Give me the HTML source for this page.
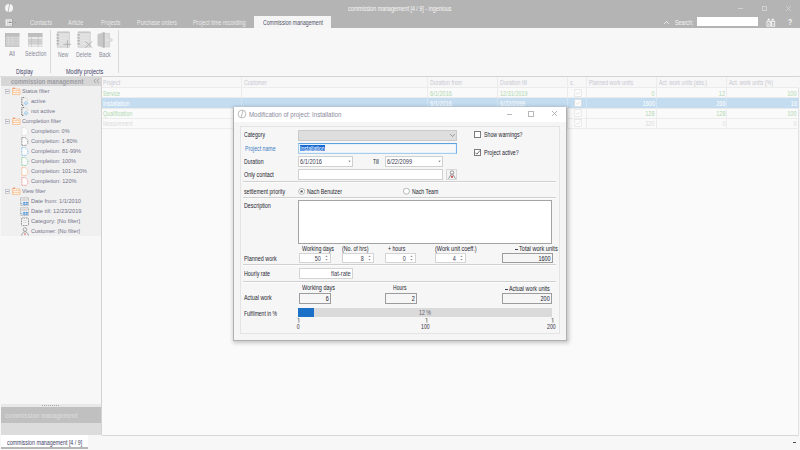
<!DOCTYPE html>
<html><head><meta charset="utf-8"><style>
html,body{margin:0;padding:0;}
body{width:800px;height:450px;overflow:hidden;position:relative;background:#f5f5f5;font-family:"Liberation Sans", sans-serif;}
body>div,body>svg,body>span{position:absolute;}
.t{position:absolute;white-space:nowrap;line-height:1;}
</style></head><body>
<div style="left:0px;top:0px;width:800px;height:28px;background:#b4b4b4"></div>
<svg style="left:4px;top:3px" width="10" height="10" viewBox="0 0 10 10"><circle cx="5" cy="5" r="4" fill="#f4f4f4"/><path d="M5.7 0.6L4.1 9.4" stroke="#b4b4b4" stroke-width="0.9"/></svg>
<span class="t" style="left:347.5px;top:6.01px;font-size:6.3px;color:#f8f8f8;font-weight:normal;;transform:scaleX(0.849);transform-origin:0 0">commission management [4 / 9] - ingenious</span>
<div style="left:738px;top:8px;width:5px;height:1px;background:#d0d0d0"></div>
<div style="left:762px;top:6px;width:5px;height:5px;border:1px solid #d0d0d0;box-sizing:border-box"></div>
<svg style="left:785px;top:5px" width="7" height="7" viewBox="0 0 7 7"><path d="M1 1L6 6M6 1L1 6" stroke="#d4d4d4" stroke-width="0.8"/></svg>
<svg style="left:5px;top:19px" width="12" height="7" viewBox="0 0 12 7"><rect x="0.6" y="0.3" width="6.8" height="6.4" fill="#f2f2f2"/><rect x="2.2" y="1.2" width="1" height="4.6" fill="#c8c8c8"/><rect x="3.6" y="2.7" width="3" height="1.4" fill="#8a8a8a"/><rect x="3.8" y="0.9" width="2.6" height="1" fill="#d0d0d0"/><rect x="3.8" y="5" width="2.6" height="1" fill="#d0d0d0"/><path d="M7.6 0V7" stroke="#8c8c8c" stroke-width="0.7"/><circle cx="10.3" cy="3.5" r="0.45" fill="#8a8a8a"/></svg>
<span class="t" style="left:30.1px;top:20.21px;font-size:6.3px;color:#eaeaea;font-weight:normal;;transform:scaleX(0.885);transform-origin:0 0">Contacts</span>
<span class="t" style="left:68.4px;top:20.21px;font-size:6.3px;color:#eaeaea;font-weight:normal;;transform:scaleX(0.874);transform-origin:0 0">Article</span>
<span class="t" style="left:100.6px;top:20.21px;font-size:6.3px;color:#eaeaea;font-weight:normal;;transform:scaleX(0.861);transform-origin:0 0">Projects</span>
<span class="t" style="left:136.6px;top:20.21px;font-size:6.3px;color:#eaeaea;font-weight:normal;;transform:scaleX(0.865);transform-origin:0 0">Purchase orders</span>
<span class="t" style="left:193px;top:20.21px;font-size:6.3px;color:#eaeaea;font-weight:normal;;transform:scaleX(0.858);transform-origin:0 0">Project time recording</span>
<div style="left:254px;top:16px;width:77px;height:12px;background:#f5f5f5"></div>
<span class="t" style="left:263px;top:20.21px;font-size:6.3px;color:#505066;font-weight:normal;;transform:scaleX(0.820);transform-origin:0 0">Commission management</span>
<svg style="left:663px;top:20px" width="7" height="5" viewBox="0 0 7 5"><path d="M1.2 3.8L3.5 1.5L5.8 3.8" fill="none" stroke="#f4f4f4" stroke-width="0.9"/></svg>
<span class="t" style="left:675px;top:19.81px;font-size:6.3px;color:#f4f4f4;font-weight:normal;;transform:scaleX(0.852);transform-origin:0 0">Search:</span>
<div style="left:697px;top:17px;width:61px;height:9px;background:#ffffff"></div>
<svg style="left:766px;top:17px" width="10" height="10" viewBox="0 0 10 10"><path d="M1.2 3.6L2.4 1.2L3.8 2.2V3.6Z M5.6 2.2L7 1.2L8.4 3.6H5.6Z" fill="#f4f4f4"/><rect x="1" y="4.3" width="3.3" height="4.9" fill="none" stroke="#f4f4f4" stroke-width="0.9"/><rect x="5.4" y="4.3" width="3.3" height="4.9" fill="none" stroke="#f4f4f4" stroke-width="0.9"/><rect x="3.8" y="4.6" width="2" height="1.2" fill="#f4f4f4"/><rect x="2" y="6.4" width="1.2" height="1.4" fill="#e8e8e8"/><rect x="6.4" y="6.4" width="1.2" height="1.4" fill="#e8e8e8"/></svg>
<span class="t" style="left:788.2px;top:17.99px;font-size:8.6px;color:#f6f6f6;font-weight:bold;;transform:scaleX(0.800);transform-origin:0 0">?</span>
<div style="left:0px;top:28px;width:800px;height:48px;background:#f7f7f7"></div>
<div style="left:0px;top:76px;width:800px;height:1px;background:#dcdcdc"></div>
<div style="left:50px;top:30px;width:1px;height:43px;background:#dadada"></div>
<div style="left:118px;top:30px;width:1px;height:43px;background:#dadada"></div>
<svg style="left:5px;top:33px" width="15" height="14" viewBox="0 0 15 14"><rect x="0" y="0" width="14.4" height="13.6" fill="#cdcdcd"/><rect x="0" y="0" width="14.4" height="3.7" fill="#bebebe"/><path d="M0.4 0V13.2H14.4" fill="none" stroke="#b6b6b6" stroke-width="0.8"/><path d="M0.8 4.3H14.4" stroke="#dedede" stroke-width="0.5"/><path d="M0.8 6.9H14.4" stroke="#dedede" stroke-width="0.5"/><path d="M0.8 9.3H14.4" stroke="#dedede" stroke-width="0.5"/><path d="M0.8 11.9H14.4" stroke="#dedede" stroke-width="0.5"/><path d="M3.4 3.7V13" stroke="#dedede" stroke-width="0.5"/><path d="M7.3 3.7V13" stroke="#dedede" stroke-width="0.5"/></svg>
<svg style="left:28px;top:33px" width="15" height="14" viewBox="0 0 15 14"><rect x="0" y="0" width="14.4" height="13.6" fill="#cdcdcd"/><rect x="0" y="0" width="14.4" height="3.7" fill="#bebebe"/><rect x="0.6" y="4.1" width="13.2" height="1.9" fill="#ececec"/><rect x="0.6" y="11.5" width="13.2" height="1.6" fill="#ececec"/><path d="M0.6 7.6H14" stroke="#dedede" stroke-width="0.5"/><path d="M0.6 9.8H14" stroke="#dedede" stroke-width="0.5"/><path d="M3.6 3.7V13.6" stroke="#b8b8b8" stroke-width="0.6"/><path d="M10.2 3.7V13.6" stroke="#b8b8b8" stroke-width="0.6"/></svg>
<span class="t" style="left:9px;top:51.41px;font-size:6.3px;color:#8a8a9a;font-weight:normal;;transform:scaleX(0.857);transform-origin:0 0">All</span>
<span class="t" style="left:24.5px;top:51.41px;font-size:6.3px;color:#8a8a9a;font-weight:normal;;transform:scaleX(0.830);transform-origin:0 0">Selection</span>
<span class="t" style="left:16.3px;top:69.21px;font-size:6.3px;color:#404066;font-weight:normal;;transform:scaleX(0.813);transform-origin:0 0">Display</span>
<svg style="left:56px;top:31px" width="17" height="18" viewBox="0 0 17 18"><rect x="1.2" y="1" width="12.2" height="15.2" fill="#dedede" stroke="#c6c6c6" stroke-width="0.6"/><path d="M1.2 1.2H13.399999999999999" stroke="#bcbcbc" stroke-width="0.8"/><path d="M0.6 3.9h2.4" stroke="#a6a6a6" stroke-width="1.1"/><path d="M3.7 3.9H12.2" stroke="#ececec" stroke-width="0.6"/><path d="M0.6 7.0h2.4" stroke="#a6a6a6" stroke-width="1.1"/><path d="M3.7 7.0H12.2" stroke="#ececec" stroke-width="0.6"/><path d="M0.6 9.8h2.4" stroke="#a6a6a6" stroke-width="1.1"/><path d="M3.7 9.8H12.2" stroke="#ececec" stroke-width="0.6"/><path d="M0.6 12.8h2.4" stroke="#a6a6a6" stroke-width="1.1"/><path d="M3.7 12.8H12.2" stroke="#ececec" stroke-width="0.6"/><path d="M11.4 9.2V16.6M7.4 13.3H15.1" stroke="#a0a0a0" stroke-width="0.7"/></svg>
<svg style="left:77px;top:31px" width="17" height="18" viewBox="0 0 17 18"><rect x="1.0" y="1" width="12.2" height="15.2" fill="#dedede" stroke="#c6c6c6" stroke-width="0.6"/><path d="M1.0 1.2H13.2" stroke="#bcbcbc" stroke-width="0.8"/><path d="M0.4 3.9h2.4" stroke="#a6a6a6" stroke-width="1.1"/><path d="M3.5 3.9H12.0" stroke="#ececec" stroke-width="0.6"/><path d="M0.4 7.0h2.4" stroke="#a6a6a6" stroke-width="1.1"/><path d="M3.5 7.0H12.0" stroke="#ececec" stroke-width="0.6"/><path d="M0.4 9.8h2.4" stroke="#a6a6a6" stroke-width="1.1"/><path d="M3.5 9.8H12.0" stroke="#ececec" stroke-width="0.6"/><path d="M0.4 12.8h2.4" stroke="#a6a6a6" stroke-width="1.1"/><path d="M3.5 12.8H12.0" stroke="#ececec" stroke-width="0.6"/><path d="M8.3 10.4L15.2 16.6M15.2 10.4L8.3 16.6" stroke="#a0a0a0" stroke-width="0.7"/></svg>
<svg style="left:97px;top:31px" width="17" height="18" viewBox="0 0 17 18"><path d="M0.9 3.5L7 1.5V16.5L0.9 14.5Z" fill="#c8c8c8" stroke="#bcbcbc" stroke-width="0.5"/><rect x="7" y="2.2" width="5.7" height="13.8" fill="#dcdcdc" stroke="#c6c6c6" stroke-width="0.5"/><path d="M7 1.2V16.8" stroke="#a0a0a0" stroke-width="0.8"/><path d="M12.7 7L15.6 9L12.7 11" fill="#e4e4e4" stroke="#c0c0c0" stroke-width="0.6"/><path d="M8 9H13.5" stroke="#ececec" stroke-width="0.6"/></svg>
<span class="t" style="left:57.8px;top:51.51px;font-size:6.3px;color:#8a8a9a;font-weight:normal;;transform:scaleX(0.809);transform-origin:0 0">New</span>
<span class="t" style="left:76px;top:51.51px;font-size:6.3px;color:#8a8a9a;font-weight:normal;;transform:scaleX(0.846);transform-origin:0 0">Delete</span>
<span class="t" style="left:99.3px;top:51.51px;font-size:6.3px;color:#8a8a9a;font-weight:normal;;transform:scaleX(0.835);transform-origin:0 0">Back</span>
<span class="t" style="left:65.8px;top:69.21px;font-size:6.3px;color:#404066;font-weight:normal;;transform:scaleX(0.878);transform-origin:0 0">Modify projects</span>
<div style="left:0px;top:77px;width:102px;height:358px;background:#f7f7f7"></div>
<div style="left:1px;top:77px;width:100px;height:159px;background:#f0f0f0"></div>
<div style="left:1px;top:77px;width:100px;height:9px;background:#d6d6d6"></div>
<div style="left:101px;top:77px;width:1px;height:358px;background:#d2d2d2"></div>
<span class="t" style="left:10.5px;top:78.96px;font-size:6.4px;color:#9c9ca2;font-weight:bold;;transform:scaleX(0.922);transform-origin:0 0">commission management</span>
<svg style="left:93px;top:78px" width="7" height="6" viewBox="0 0 7 6"><path d="M3 0.8L0.9 3L3 5.2M6 0.8L3.9 3L6 5.2" fill="none" stroke="#8a8a8a" stroke-width="0.6"/></svg>
<svg style="left:5px;top:88.5px" width="5" height="5" viewBox="0 0 5 5"><rect x="0.3" y="0.3" width="4.4" height="4.4" fill="#f4f4f4" stroke="#a8a8a8" stroke-width="0.5"/><path d="M1.2 2.5H3.8" stroke="#6078a0" stroke-width="0.6"/></svg>
<svg style="left:12px;top:87px" width="9" height="8" viewBox="0 0 9 8"><path d="M0.5 1.2H3.2L4 2H8V7.5H0.5Z" fill="#fbf0e4" stroke="#f4a868" stroke-width="0.55"/><path d="M1 1.3H3" stroke="#ef7050" stroke-width="0.8"/><path d="M0.8 3.6H7.8M0.8 5.5H7.8" stroke="#f6b07a" stroke-width="0.7" stroke-dasharray="1.2 0.5"/></svg>
<span class="t" style="left:22px;top:88.06px;font-size:6px;color:#74748a;font-weight:normal;;transform:scaleX(0.916);transform-origin:0 0">Status filter</span>
<svg style="left:21px;top:96.5px" width="8" height="9" viewBox="0 0 8 9"><path d="M3 0.6H0.8V8.4H3" fill="none" stroke="#404040" stroke-width="0.7" stroke-dasharray="1.1 0.6"/><path d="M3 0.6H5L6.6 2.2V4" fill="none" stroke="#c8c8c8" stroke-width="0.5"/><path d="M5 4.3L7 6.2L5 8.2L3 6.2Z" fill="none" stroke="#5ab0e8" stroke-width="0.55"/><circle cx="5" cy="6.2" r="0.5" fill="#5ab0e8"/></svg>
<span class="t" style="left:31px;top:98.06px;font-size:6px;color:#74748a;font-weight:normal;;transform:scaleX(0.925);transform-origin:0 0">active</span>
<svg style="left:21px;top:106.5px" width="8" height="9" viewBox="0 0 8 9"><path d="M3 0.6H0.8V8.4H3" fill="none" stroke="#404040" stroke-width="0.7" stroke-dasharray="1.1 0.6"/><path d="M3 0.6H5L6.6 2.2V4" fill="none" stroke="#c8c8c8" stroke-width="0.5"/><path d="M5 4.3L7 6.2L5 8.2L3 6.2Z" fill="none" stroke="#5ab0e8" stroke-width="0.55"/><circle cx="5" cy="6.2" r="0.5" fill="#5ab0e8"/></svg>
<span class="t" style="left:31px;top:108.06px;font-size:6px;color:#74748a;font-weight:normal;;transform:scaleX(0.935);transform-origin:0 0">not active</span>
<svg style="left:5px;top:118.5px" width="5" height="5" viewBox="0 0 5 5"><rect x="0.3" y="0.3" width="4.4" height="4.4" fill="#f4f4f4" stroke="#a8a8a8" stroke-width="0.5"/><path d="M1.2 2.5H3.8" stroke="#6078a0" stroke-width="0.6"/></svg>
<svg style="left:12px;top:117px" width="9" height="8" viewBox="0 0 9 8"><path d="M0.5 1.2H3.2L4 2H8V7.5H0.5Z" fill="#fbf0e4" stroke="#f4a868" stroke-width="0.55"/><path d="M1 1.3H3" stroke="#ef7050" stroke-width="0.8"/><path d="M0.8 3.6H7.8M0.8 5.5H7.8" stroke="#f6b07a" stroke-width="0.7" stroke-dasharray="1.2 0.5"/></svg>
<span class="t" style="left:22px;top:118.06px;font-size:6px;color:#74748a;font-weight:normal;;transform:scaleX(0.900);transform-origin:0 0">Completion filter</span>
<svg style="left:21px;top:126.5px" width="8" height="9" viewBox="0 0 8 9"><path d="M0.8 0.6H4.3L6.8 3.1V6.6L5 8.4H0.8Z" fill="#fbfbfb" stroke="#c8c8c8" stroke-width="0.6" stroke-dasharray="1 0.6"/></svg>
<span class="t" style="left:31px;top:128.06px;font-size:6px;color:#74748a;font-weight:normal;;transform:scaleX(0.909);transform-origin:0 0">Completion: 0%</span>
<svg style="left:21px;top:136.5px" width="8" height="9" viewBox="0 0 8 9"><path d="M0.8 0.6H4.3L6.8 3.1V6.6L5 8.4H0.8Z" fill="#fbfbfb" stroke="#404040" stroke-width="0.6" stroke-dasharray="1 0.6"/></svg>
<span class="t" style="left:31px;top:138.06px;font-size:6px;color:#74748a;font-weight:normal;;transform:scaleX(0.911);transform-origin:0 0">Completion: 1-80%</span>
<svg style="left:21px;top:146.5px" width="8" height="9" viewBox="0 0 8 9"><path d="M0.8 0.6H4.3L6.8 3.1V6.6L5 8.4H0.8Z" fill="#fbfbfb" stroke="#4898e0" stroke-width="0.6" stroke-dasharray="1 0.6"/></svg>
<span class="t" style="left:31px;top:148.06px;font-size:6px;color:#74748a;font-weight:normal;;transform:scaleX(0.920);transform-origin:0 0">Completion: 81-99%</span>
<svg style="left:21px;top:156.5px" width="8" height="9" viewBox="0 0 8 9"><path d="M0.8 0.6H4.3L6.8 3.1V6.6L5 8.4H0.8Z" fill="#fbfbfb" stroke="#48b070" stroke-width="0.6" stroke-dasharray="1 0.6"/></svg>
<span class="t" style="left:31px;top:158.06px;font-size:6px;color:#74748a;font-weight:normal;;transform:scaleX(0.918);transform-origin:0 0">Completion: 100%</span>
<svg style="left:21px;top:166.5px" width="8" height="9" viewBox="0 0 8 9"><path d="M0.8 0.6H4.3L6.8 3.1V6.6L5 8.4H0.8Z" fill="#fbfbfb" stroke="#f49050" stroke-width="0.6" stroke-dasharray="1 0.6"/></svg>
<span class="t" style="left:31px;top:168.06px;font-size:6px;color:#74748a;font-weight:normal;;transform:scaleX(0.917);transform-origin:0 0">Completion: 101-120%</span>
<svg style="left:21px;top:176.5px" width="8" height="9" viewBox="0 0 8 9"><path d="M0.8 0.6H4.3L6.8 3.1V6.6L5 8.4H0.8Z" fill="#fbfbfb" stroke="#f05858" stroke-width="0.6" stroke-dasharray="1 0.6"/></svg>
<span class="t" style="left:31px;top:178.06px;font-size:6px;color:#74748a;font-weight:normal;;transform:scaleX(0.928);transform-origin:0 0">Completion: 120%</span>
<svg style="left:5px;top:188.5px" width="5" height="5" viewBox="0 0 5 5"><rect x="0.3" y="0.3" width="4.4" height="4.4" fill="#f4f4f4" stroke="#a8a8a8" stroke-width="0.5"/><path d="M1.2 2.5H3.8" stroke="#6078a0" stroke-width="0.6"/></svg>
<svg style="left:12px;top:187px" width="9" height="8" viewBox="0 0 9 8"><path d="M0.5 1.2H3.2L4 2H8V7.5H0.5Z" fill="#fbf0e4" stroke="#f4a868" stroke-width="0.55"/><path d="M1 1.3H3" stroke="#ef7050" stroke-width="0.8"/><path d="M0.8 3.6H7.8M0.8 5.5H7.8" stroke="#f6b07a" stroke-width="0.7" stroke-dasharray="1.2 0.5"/></svg>
<span class="t" style="left:22px;top:188.06px;font-size:6px;color:#74748a;font-weight:normal;;transform:scaleX(0.907);transform-origin:0 0">View filter</span>
<svg style="left:20px;top:196.5px" width="9" height="9" viewBox="0 0 9 9"><path d="M0.6 8.4V0.8H8.4V8.4H0.6" fill="#f4f4f4" stroke="#606060" stroke-width="0.5" stroke-dasharray="0.9 0.5"/><path d="M1.5 2.3H7.5M1.5 3.7H7.5" stroke="#b8b8b8" stroke-width="0.6"/><path d="M3.2 5H7.8V7.8H3.2Z" fill="#4a92d8"/><path d="M3.2 6.4H7.8M5.5 5V7.8" stroke="#e4eef8" stroke-width="0.5"/><path d="M1.2 5.6L2.4 7.4" stroke="#4a92d8" stroke-width="0.7"/></svg>
<span class="t" style="left:31px;top:198.06px;font-size:6px;color:#74748a;font-weight:normal;;transform:scaleX(0.943);transform-origin:0 0">Date from: 1/1/2010</span>
<svg style="left:20px;top:206.5px" width="9" height="9" viewBox="0 0 9 9"><path d="M0.6 8.4V0.8H8.4V8.4H0.6" fill="#f4f4f4" stroke="#606060" stroke-width="0.5" stroke-dasharray="0.9 0.5"/><path d="M1.5 2.3H7.5M1.5 3.7H7.5" stroke="#b8b8b8" stroke-width="0.6"/><path d="M3.2 5H7.8V7.8H3.2Z" fill="#4a92d8"/><path d="M3.2 6.4H7.8M5.5 5V7.8" stroke="#e4eef8" stroke-width="0.5"/><path d="M1.2 5.6L2.4 7.4" stroke="#4a92d8" stroke-width="0.7"/></svg>
<span class="t" style="left:31px;top:208.06px;font-size:6px;color:#74748a;font-weight:normal;;transform:scaleX(0.946);transform-origin:0 0">Date till: 12/23/2019</span>
<svg style="left:21px;top:216.5px" width="8" height="9" viewBox="0 0 8 9"><rect x="0.5" y="1" width="7" height="7.5" rx="1" fill="#f6f6f6" stroke="#303030" stroke-width="0.6" stroke-dasharray="1 0.7"/><path d="M2 3.5H6M2 5.5H6" stroke="#c0c0c0" stroke-width="0.5"/></svg>
<span class="t" style="left:31px;top:218.06px;font-size:6px;color:#74748a;font-weight:normal;;transform:scaleX(0.948);transform-origin:0 0">Category: [No filter]</span>
<svg style="left:21px;top:226.5px" width="8" height="9" viewBox="0 0 8 9"><circle cx="4" cy="2.5" r="1.8" fill="none" stroke="#707070" stroke-width="0.55"/><path d="M0.6 8.8C1 5.8 2.5 4.8 4 4.8S7 5.8 7.4 8.8" fill="none" stroke="#707070" stroke-width="0.55"/><ellipse cx="4" cy="7.2" rx="0.7" ry="1.1" fill="#e07070"/></svg>
<span class="t" style="left:31px;top:228.06px;font-size:6px;color:#74748a;font-weight:normal;;transform:scaleX(0.919);transform-origin:0 0">Customer: [No filter]</span>
<div style="left:1px;top:404px;width:100px;height:3px;background:#e8e8e8"></div>
<div style="left:42px;top:405px;width:18px;height:1px;background:repeating-linear-gradient(90deg,#a8a8a8 0 1px,transparent 1px 2px)"></div>
<div style="left:1px;top:407px;width:100px;height:16px;background:#c0c0c0"></div>
<span class="t" style="left:4.5px;top:413.17px;font-size:6.6px;color:#dcdcdc;font-weight:bold;opacity:0.85;;transform:scaleX(0.894);transform-origin:0 0">commission management</span>
<div style="left:1px;top:423px;width:100px;height:12px;background:#dcdcdc"></div>
<div style="left:102px;top:77px;width:697px;height:359px;background:#fafafa"></div>
<div style="left:102px;top:435px;width:697px;height:1px;background:#d8d8d8"></div>
<div style="left:798px;top:77px;width:1px;height:359px;background:#e2e2e2"></div>
<div style="left:102px;top:77px;width:697px;height:10px;background:#f7f7f7"></div>
<div style="left:102px;top:76px;width:697px;height:1px;background:#d4d4d4"></div>
<div style="left:102px;top:87px;width:697px;height:1px;background:#ececec"></div>
<div style="left:102px;top:97px;width:697px;height:1px;background:#ececec"></div>
<div style="left:102px;top:118px;width:697px;height:1px;background:#ececec"></div>
<div style="left:102px;top:128px;width:697px;height:1px;background:#ececec"></div>
<div style="left:102px;top:98px;width:697px;height:10px;background:#c4dcf0"></div>
<div style="left:102px;top:108px;width:697px;height:1px;background:#ececec"></div>
<div style="left:241px;top:77px;width:1px;height:21px;background:#ececec"></div>
<div style="left:241px;top:98px;width:1px;height:10px;background:#d2e4f2"></div>
<div style="left:241px;top:108px;width:1px;height:20px;background:#ececec"></div>
<div style="left:427px;top:77px;width:1px;height:21px;background:#ececec"></div>
<div style="left:427px;top:98px;width:1px;height:10px;background:#d2e4f2"></div>
<div style="left:427px;top:108px;width:1px;height:20px;background:#ececec"></div>
<div style="left:497px;top:77px;width:1px;height:21px;background:#ececec"></div>
<div style="left:497px;top:98px;width:1px;height:10px;background:#d2e4f2"></div>
<div style="left:497px;top:108px;width:1px;height:20px;background:#ececec"></div>
<div style="left:567px;top:77px;width:1px;height:21px;background:#ececec"></div>
<div style="left:567px;top:98px;width:1px;height:10px;background:#d2e4f2"></div>
<div style="left:567px;top:108px;width:1px;height:20px;background:#ececec"></div>
<div style="left:586px;top:77px;width:1px;height:21px;background:#ececec"></div>
<div style="left:586px;top:98px;width:1px;height:10px;background:#d2e4f2"></div>
<div style="left:586px;top:108px;width:1px;height:20px;background:#ececec"></div>
<div style="left:656px;top:77px;width:1px;height:21px;background:#ececec"></div>
<div style="left:656px;top:98px;width:1px;height:10px;background:#d2e4f2"></div>
<div style="left:656px;top:108px;width:1px;height:20px;background:#ececec"></div>
<div style="left:726px;top:77px;width:1px;height:21px;background:#ececec"></div>
<div style="left:726px;top:98px;width:1px;height:10px;background:#d2e4f2"></div>
<div style="left:726px;top:108px;width:1px;height:20px;background:#ececec"></div>
<span class="t" style="left:103.2px;top:80.21px;font-size:6.3px;color:#c8c8d2;font-weight:normal;;transform:scaleX(0.877);transform-origin:0 0">Project</span>
<span class="t" style="left:244px;top:80.21px;font-size:6.3px;color:#c8c8d2;font-weight:normal;;transform:scaleX(0.842);transform-origin:0 0">Customer</span>
<span class="t" style="left:430.2px;top:80.21px;font-size:6.3px;color:#c8c8d2;font-weight:normal;;transform:scaleX(0.839);transform-origin:0 0">Duration from</span>
<span class="t" style="left:500px;top:80.21px;font-size:6.3px;color:#c8c8d2;font-weight:normal;;transform:scaleX(0.857);transform-origin:0 0">Duration till</span>
<span class="t" style="left:570px;top:80.21px;font-size:6.3px;color:#c8c8d2;font-weight:normal;;transform:scaleX(0.816);transform-origin:0 0">s.</span>
<span class="t" style="left:589px;top:80.21px;font-size:6.3px;color:#c8c8d2;font-weight:normal;;transform:scaleX(0.827);transform-origin:0 0">Planned work units</span>
<span class="t" style="left:659px;top:80.21px;font-size:6.3px;color:#c8c8d2;font-weight:normal;;transform:scaleX(0.816);transform-origin:0 0">Act. work units (abs.)</span>
<span class="t" style="left:729px;top:80.21px;font-size:6.3px;color:#c8c8d2;font-weight:normal;;transform:scaleX(0.838);transform-origin:0 0">Act. work units (%)</span>
<span class="t" style="left:103.3px;top:90.71px;font-size:6.3px;color:#b0d8b0;font-weight:normal;;transform:scaleX(0.819);transform-origin:0 0">Service</span>
<span class="t" style="left:430.2px;top:90.71px;font-size:6.3px;color:#b0d8b0;font-weight:normal;;transform:scaleX(0.897);transform-origin:0 0">6/1/2016</span>
<span class="t" style="left:500px;top:90.71px;font-size:6.3px;color:#b0d8b0;font-weight:normal;;transform:scaleX(0.879);transform-origin:0 0">12/31/2019</span>
<span class="t" style="right:145px;top:90.71px;font-size:6.3px;color:#b0d8b0;font-weight:normal;;transform:scaleX(0.880);transform-origin:100% 0">0</span>
<span class="t" style="right:74.5px;top:90.71px;font-size:6.3px;color:#b0d8b0;font-weight:normal;;transform:scaleX(0.880);transform-origin:100% 0">12</span>
<span class="t" style="right:3px;top:90.71px;font-size:6.3px;color:#b0d8b0;font-weight:normal;;transform:scaleX(0.880);transform-origin:100% 0">100</span>
<svg style="left:574px;top:89.0px" width="8" height="8" viewBox="0 0 8 8"><rect x="0.8" y="0.6" width="6.4" height="6.8" fill="#fdfdfd" stroke="#dcdcdc" stroke-width="0.6"/><path d="M2.2 4.2L3.5 5.3L5.8 2.6" fill="none" stroke="#cacaca" stroke-width="0.55"/></svg>
<span class="t" style="left:103.3px;top:100.71px;font-size:6.3px;color:#ffffff;font-weight:normal;;transform:scaleX(0.880);transform-origin:0 0">Installation</span>
<span class="t" style="left:430.2px;top:100.71px;font-size:6.3px;color:#ffffff;font-weight:normal;;transform:scaleX(0.897);transform-origin:0 0">6/1/2016</span>
<span class="t" style="left:500px;top:100.71px;font-size:6.3px;color:#ffffff;font-weight:normal;;transform:scaleX(0.899);transform-origin:0 0">6/22/2099</span>
<span class="t" style="right:145px;top:100.71px;font-size:6.3px;color:#ffffff;font-weight:normal;;transform:scaleX(0.880);transform-origin:100% 0">1600</span>
<span class="t" style="right:74.5px;top:100.71px;font-size:6.3px;color:#ffffff;font-weight:normal;;transform:scaleX(0.880);transform-origin:100% 0">266</span>
<span class="t" style="right:3px;top:100.71px;font-size:6.3px;color:#ffffff;font-weight:normal;;transform:scaleX(0.880);transform-origin:100% 0">16</span>
<svg style="left:574px;top:99.0px" width="8" height="8" viewBox="0 0 8 8"><rect x="0.8" y="0.6" width="6.4" height="6.8" fill="#fdfdfd" stroke="#dcdcdc" stroke-width="0.6"/><path d="M2.2 4.2L3.5 5.3L5.8 2.6" fill="none" stroke="#cacaca" stroke-width="0.55"/></svg>
<span class="t" style="left:103.3px;top:110.71px;font-size:6.3px;color:#b0d8b0;font-weight:normal;;transform:scaleX(0.839);transform-origin:0 0">Qualification</span>
<span class="t" style="left:430.2px;top:110.71px;font-size:6.3px;color:#b0d8b0;font-weight:normal;;transform:scaleX(0.897);transform-origin:0 0">6/1/2016</span>
<span class="t" style="left:500px;top:110.71px;font-size:6.3px;color:#b0d8b0;font-weight:normal;;transform:scaleX(0.899);transform-origin:0 0">6/22/2099</span>
<span class="t" style="right:145px;top:110.71px;font-size:6.3px;color:#b0d8b0;font-weight:normal;;transform:scaleX(0.880);transform-origin:100% 0">128</span>
<span class="t" style="right:74.5px;top:110.71px;font-size:6.3px;color:#b0d8b0;font-weight:normal;;transform:scaleX(0.880);transform-origin:100% 0">128</span>
<span class="t" style="right:3px;top:110.71px;font-size:6.3px;color:#b0d8b0;font-weight:normal;;transform:scaleX(0.880);transform-origin:100% 0">100</span>
<svg style="left:574px;top:109.0px" width="8" height="8" viewBox="0 0 8 8"><rect x="0.8" y="0.6" width="6.4" height="6.8" fill="#fdfdfd" stroke="#dcdcdc" stroke-width="0.6"/><path d="M2.2 4.2L3.5 5.3L5.8 2.6" fill="none" stroke="#cacaca" stroke-width="0.55"/></svg>
<span class="t" style="left:103.3px;top:120.71px;font-size:6.3px;color:#dadada;font-weight:normal;;transform:scaleX(0.766);transform-origin:0 0">Measurement</span>
<span class="t" style="left:430.2px;top:120.71px;font-size:6.3px;color:#dadada;font-weight:normal;;transform:scaleX(0.897);transform-origin:0 0">6/1/2016</span>
<span class="t" style="left:500px;top:120.71px;font-size:6.3px;color:#dadada;font-weight:normal;;transform:scaleX(0.899);transform-origin:0 0">6/22/2099</span>
<span class="t" style="right:145px;top:120.71px;font-size:6.3px;color:#dadada;font-weight:normal;;transform:scaleX(0.880);transform-origin:100% 0">320</span>
<span class="t" style="right:74.5px;top:120.71px;font-size:6.3px;color:#dadada;font-weight:normal;;transform:scaleX(0.880);transform-origin:100% 0">0</span>
<span class="t" style="right:3px;top:120.71px;font-size:6.3px;color:#dadada;font-weight:normal;;transform:scaleX(0.880);transform-origin:100% 0">0</span>
<svg style="left:574px;top:119.0px" width="8" height="8" viewBox="0 0 8 8"><rect x="0.8" y="0.6" width="6.4" height="6.8" fill="#fdfdfd" stroke="#dcdcdc" stroke-width="0.6"/><path d="M2.2 4.2L3.5 5.3L5.8 2.6" fill="none" stroke="#cacaca" stroke-width="0.55"/></svg>
<div style="left:0px;top:436px;width:800px;height:14px;background:#f7f7f7"></div>
<div style="left:1px;top:435px;width:87px;height:12px;background:#ffffff"></div>
<div style="left:1px;top:447px;width:87px;height:2px;background:#b8b8b8"></div>
<span class="t" style="left:6.8px;top:440.31px;font-size:6.3px;color:#404066;font-weight:normal;;transform:scaleX(0.842);transform-origin:0 0">commission management [4 / 9]</span>
<div style="left:793px;top:442px;width:2.5px;height:1px;background:#505050"></div>
<div style="left:233px;top:107px;width:334px;height:234px;box-shadow:1px 1px 4px 1px rgba(0,0,0,0.22);background:#f5f5f5;border:1px solid #b0b0b0;border-top-color:#c8d0d8;box-sizing:border-box"></div>
<div style="left:234px;top:107px;width:332px;height:15px;background:#ffffff"></div>
<svg style="left:237px;top:109px" width="10" height="10" viewBox="0 0 10 10"><circle cx="5" cy="5" r="3.9" fill="none" stroke="#a0a0a0" stroke-width="0.7"/><path d="M6 1.5L4 8.5" stroke="#a0a0a0" stroke-width="0.7"/></svg>
<span class="t" style="left:248.6px;top:111.47px;font-size:7px;color:#8a8a9a;font-weight:normal;;transform:scaleX(0.876);transform-origin:0 0">Modification of project: Installation</span>
<div style="left:506.5px;top:114px;width:5.5px;height:1px;background:#b8b8b8"></div>
<div style="left:528.3px;top:111.2px;width:5.8px;height:5.8px;border:0.8px solid #b8b8b8;box-sizing:border-box"></div>
<svg style="left:551px;top:110px" width="7" height="7" viewBox="0 0 7 7"><path d="M1 1L6 6M6 1L1 6" stroke="#a4a4a4" stroke-width="0.8"/></svg>
<div style="left:240px;top:126px;width:320px;height:208px;border:1px solid #e4e4e4;box-sizing:border-box;background:#f6f6f6"></div>
<span class="t" style="left:244.1px;top:130.87px;font-size:7px;color:#1e1e2e;font-weight:normal;;transform:scaleX(0.739);transform-origin:0 0">Category</span>
<span class="t" style="left:244.5px;top:144.87px;font-size:7px;color:#3c7cc4;font-weight:normal;;transform:scaleX(0.740);transform-origin:0 0">Project name</span>
<span class="t" style="left:244.4px;top:157.87px;font-size:7px;color:#1e1e2e;font-weight:normal;;transform:scaleX(0.741);transform-origin:0 0">Duration</span>
<span class="t" style="left:244.4px;top:170.77px;font-size:7px;color:#1e1e2e;font-weight:normal;;transform:scaleX(0.766);transform-origin:0 0">Only contact</span>
<div style="left:298px;top:130px;width:159px;height:11px;background:#dedede;border:1px solid #cacaca;box-sizing:border-box"></div>
<svg style="left:449px;top:133px" width="7" height="5" viewBox="0 0 7 5"><path d="M1.2 1.2L3.5 3.5L5.8 1.2" fill="none" stroke="#6a6a6a" stroke-width="0.6"/></svg>
<div style="left:298px;top:143px;width:159px;height:11px;background:#f8f8f8;border:1px solid #a8ccee;border-top-color:#5ea0e2;border-right-color:#78b2ea;box-shadow:inset 0 0 0 1px #e8f2fb;box-sizing:border-box"></div>
<div style="left:299.5px;top:145px;width:25.5px;height:6px;background:#1a6ad4"></div>
<span class="t" style="left:300.3px;top:144.87px;font-size:7px;color:#ffffff;font-weight:normal;;transform:scaleX(0.732);transform-origin:0 0">Installation</span>
<div style="left:298px;top:156px;width:55px;height:11px;background:#ffffff;border:1px solid #d0d0d0;box-sizing:border-box"></div>
<span class="t" style="left:300.3px;top:158.07px;font-size:7px;color:#404050;font-weight:normal;;transform:scaleX(0.807);transform-origin:0 0">6/1/2016</span>
<svg style="left:347px;top:160px" width="5" height="3" viewBox="0 0 5 3"><path d="M1.3 0.8H3.7L2.5 2.1Z" fill="#606060"/></svg>
<span class="t" style="left:373.3px;top:157.77px;font-size:7px;color:#1e1e2e;font-weight:normal;;transform:scaleX(0.657);transform-origin:0 0">Till</span>
<div style="left:385px;top:156px;width:58px;height:11px;background:#ffffff;border:1px solid #d0d0d0;box-sizing:border-box"></div>
<span class="t" style="left:387px;top:158.07px;font-size:7px;color:#404050;font-weight:normal;;transform:scaleX(0.803);transform-origin:0 0">6/22/2099</span>
<svg style="left:436.5px;top:160px" width="5" height="3" viewBox="0 0 5 3"><path d="M1.3 0.8H3.7L2.5 2.1Z" fill="#606060"/></svg>
<div style="left:298px;top:169px;width:145px;height:11px;background:#ffffff;border:1px solid #d0d0d0;box-sizing:border-box"></div>
<div style="left:446px;top:169px;width:11px;height:10.5px;background:#f2f2f2;border:1px solid #d8d8d8;box-sizing:border-box"></div>
<svg style="left:447px;top:170px" width="9" height="9" viewBox="0 0 9 9"><circle cx="5" cy="2.5" r="1.7" fill="#ffffff" stroke="#505050" stroke-width="0.6"/><path d="M4.2 4.2L1.6 8.6M5.8 4.2L8.4 8.6" fill="none" stroke="#505050" stroke-width="0.6"/><ellipse cx="5" cy="6.8" rx="0.9" ry="1.2" fill="#c04040"/></svg>
<div style="left:474px;top:131px;width:7px;height:7px;background:#ffffff;border:1px solid #7c7c7c;box-sizing:border-box"></div>
<span class="t" style="left:484px;top:131.17px;font-size:7px;color:#1e1e2e;font-weight:normal;;transform:scaleX(0.750);transform-origin:0 0">Show warnings?</span>
<div style="left:474px;top:149px;width:7px;height:7px;background:#ffffff;border:1px solid #7c7c7c;box-sizing:border-box"></div>
<svg style="left:474px;top:149px" width="7" height="7" viewBox="0 0 7 7"><path d="M1.3 3.6L2.9 5.2L6 1.5" fill="none" stroke="#303030" stroke-width="0.7"/></svg>
<span class="t" style="left:484px;top:149.27px;font-size:7px;color:#1e1e2e;font-weight:normal;;transform:scaleX(0.757);transform-origin:0 0">Project active?</span>
<div style="left:243px;top:181px;width:313px;height:1px;background:#d0d0d0"></div>
<div style="left:243px;top:182px;width:313px;height:1px;background:#fcfcfc"></div>
<div style="left:243px;top:197px;width:313px;height:1px;background:#d0d0d0"></div>
<div style="left:243px;top:198px;width:313px;height:1px;background:#fcfcfc"></div>
<div style="left:243px;top:264px;width:313px;height:1px;background:#d0d0d0"></div>
<div style="left:243px;top:265px;width:313px;height:1px;background:#fcfcfc"></div>
<div style="left:243px;top:281px;width:313px;height:1px;background:#d0d0d0"></div>
<div style="left:243px;top:282px;width:313px;height:1px;background:#fcfcfc"></div>
<span class="t" style="left:244px;top:188.07px;font-size:7px;color:#1e1e2e;font-weight:normal;;transform:scaleX(0.742);transform-origin:0 0">settlement priority</span>
<svg style="left:298px;top:188px" width="7" height="7" viewBox="0 0 7 7"><circle cx="3.6" cy="3.4" r="3" fill="#fff" stroke="#8c8c8c" stroke-width="0.6"/><circle cx="3.6" cy="3.4" r="1.2" fill="#585858"/></svg>
<span class="t" style="left:307px;top:187.77px;font-size:7px;color:#1e1e2e;font-weight:normal;;transform:scaleX(0.754);transform-origin:0 0">Nach Benutzer</span>
<svg style="left:403px;top:188px" width="7" height="7" viewBox="0 0 7 7"><circle cx="3.4" cy="3.2" r="3" fill="#fff" stroke="#8c8c8c" stroke-width="0.6"/></svg>
<span class="t" style="left:411.5px;top:187.77px;font-size:7px;color:#1e1e2e;font-weight:normal;;transform:scaleX(0.748);transform-origin:0 0">Nach Team</span>
<span class="t" style="left:244px;top:201.57px;font-size:7px;color:#1e1e2e;font-weight:normal;;transform:scaleX(0.764);transform-origin:0 0">Description</span>
<div style="left:298px;top:200px;width:254px;height:44px;background:#ffffff;border:1px solid #a4a4a4;box-sizing:border-box"></div>
<span class="t" style="left:301.6px;top:244.97px;font-size:7px;color:#1e1e2e;font-weight:normal;;transform:scaleX(0.757);transform-origin:0 0">Working days</span>
<span class="t" style="left:342px;top:244.97px;font-size:7px;color:#1e1e2e;font-weight:normal;;transform:scaleX(0.754);transform-origin:0 0">(No. of hrs)</span>
<span class="t" style="left:388px;top:244.97px;font-size:7px;color:#1e1e2e;font-weight:normal;;transform:scaleX(0.735);transform-origin:0 0">+ hours</span>
<span class="t" style="left:434.7px;top:244.97px;font-size:7px;color:#1e1e2e;font-weight:normal;;transform:scaleX(0.786);transform-origin:0 0">(Work unit coeff.)</span>
<div style="left:515.2px;top:248.7px;width:2.6px;height:1.1px;background:#404050"></div>
<span class="t" style="left:519.3px;top:244.97px;font-size:7px;color:#1e1e2e;font-weight:normal;;transform:scaleX(0.802);transform-origin:0 0">Total work units</span>
<span class="t" style="left:244px;top:254.57px;font-size:7px;color:#1e1e2e;font-weight:normal;;transform:scaleX(0.769);transform-origin:0 0">Planned work</span>
<div style="left:299px;top:253px;width:32px;height:10px;background:#ffffff;border:1px solid #d4d4d4;box-sizing:border-box"></div>
<svg style="left:324px;top:254px" width="5" height="8" viewBox="0 0 5 8"><path d="M1.2 3L2.5 1.6L3.8 3Z M1.2 5L2.5 6.4L3.8 5Z" fill="#9a9a9a"/></svg>
<span class="t" style="right:479.5px;top:254.77px;font-size:7px;color:#404050;font-weight:normal;;transform:scaleX(0.780);transform-origin:100% 0">50</span>
<div style="left:342px;top:253px;width:32px;height:10px;background:#ffffff;border:1px solid #d4d4d4;box-sizing:border-box"></div>
<svg style="left:367px;top:254px" width="5" height="8" viewBox="0 0 5 8"><path d="M1.2 3L2.5 1.6L3.8 3Z M1.2 5L2.5 6.4L3.8 5Z" fill="#9a9a9a"/></svg>
<span class="t" style="right:436.5px;top:254.77px;font-size:7px;color:#404050;font-weight:normal;;transform:scaleX(0.780);transform-origin:100% 0">8</span>
<div style="left:385px;top:253px;width:31px;height:10px;background:#ffffff;border:1px solid #d4d4d4;box-sizing:border-box"></div>
<svg style="left:409px;top:254px" width="5" height="8" viewBox="0 0 5 8"><path d="M1.2 3L2.5 1.6L3.8 3Z M1.2 5L2.5 6.4L3.8 5Z" fill="#9a9a9a"/></svg>
<span class="t" style="right:394.5px;top:254.77px;font-size:7px;color:#404050;font-weight:normal;;transform:scaleX(0.780);transform-origin:100% 0">0</span>
<div style="left:435px;top:253px;width:31px;height:10px;background:#ffffff;border:1px solid #d4d4d4;box-sizing:border-box"></div>
<svg style="left:459px;top:254px" width="5" height="8" viewBox="0 0 5 8"><path d="M1.2 3L2.5 1.6L3.8 3Z M1.2 5L2.5 6.4L3.8 5Z" fill="#9a9a9a"/></svg>
<span class="t" style="right:344.5px;top:254.77px;font-size:7px;color:#404050;font-weight:normal;;transform:scaleX(0.780);transform-origin:100% 0">4</span>
<div style="left:502px;top:253px;width:50.5px;height:10px;background:#f6f6f6;border:1px solid #9c9c9c;box-sizing:border-box"></div>
<span class="t" style="right:249.5px;top:254.77px;font-size:7px;color:#202030;font-weight:normal;;transform:scaleX(0.780);transform-origin:100% 0">1600</span>
<span class="t" style="left:244px;top:269.77px;font-size:7px;color:#1e1e2e;font-weight:normal;;transform:scaleX(0.759);transform-origin:0 0">Hourly rate</span>
<div style="left:299px;top:268px;width:54px;height:10.5px;background:#ffffff;border:1px solid #d4d4d4;box-sizing:border-box"></div>
<span class="t" style="right:449.4px;top:269.87px;font-size:7px;color:#404050;font-weight:normal;;transform:scaleX(0.830);transform-origin:100% 0">flat-rate</span>
<span class="t" style="left:301.5px;top:284.47px;font-size:7px;color:#1e1e2e;font-weight:normal;;transform:scaleX(0.778);transform-origin:0 0">Working days</span>
<span class="t" style="left:393px;top:284.47px;font-size:7px;color:#1e1e2e;font-weight:normal;;transform:scaleX(0.723);transform-origin:0 0">Hours</span>
<div style="left:505.1px;top:288.6px;width:2.6px;height:1.1px;background:#404050"></div>
<span class="t" style="left:509.2px;top:285.17px;font-size:7px;color:#1e1e2e;font-weight:normal;;transform:scaleX(0.771);transform-origin:0 0">Actual work units</span>
<span class="t" style="left:244px;top:294.17px;font-size:7px;color:#1e1e2e;font-weight:normal;;transform:scaleX(0.768);transform-origin:0 0">Actual work</span>
<div style="left:299px;top:293px;width:32px;height:11px;background:#f6f6f6;border:1px solid #9c9c9c;box-sizing:border-box"></div>
<span class="t" style="right:471.2px;top:295.07px;font-size:7px;color:#202030;font-weight:normal;;transform:scaleX(0.780);transform-origin:100% 0">6</span>
<div style="left:385px;top:293px;width:32px;height:11px;background:#f6f6f6;border:1px solid #9c9c9c;box-sizing:border-box"></div>
<span class="t" style="right:385.2px;top:295.07px;font-size:7px;color:#202030;font-weight:normal;;transform:scaleX(0.780);transform-origin:100% 0">2</span>
<div style="left:502px;top:293px;width:50px;height:11px;background:#f6f6f6;border:1px solid #9c9c9c;box-sizing:border-box"></div>
<span class="t" style="right:250.20000000000005px;top:295.07px;font-size:7px;color:#202030;font-weight:normal;;transform:scaleX(0.780);transform-origin:100% 0">200</span>
<span class="t" style="left:244px;top:309.57px;font-size:7px;color:#1e1e2e;font-weight:normal;;transform:scaleX(0.719);transform-origin:0 0">Fulfilment in %</span>
<div style="left:298px;top:308px;width:254px;height:9px;background:#dadada"></div>
<div style="left:298px;top:308px;width:15.5px;height:9px;background:#1c70c8"></div>
<span class="t" style="left:419px;top:309.17px;font-size:7px;color:#606070;font-weight:normal;;transform:scaleX(0.752);transform-origin:0 0">12 %</span>
<svg style="left:296.5px;top:317.5px" width="3" height="5" viewBox="0 0 3 5"><path d="M1.9 0.3V4.7M0.6 0.6L1.9 0.3" fill="none" stroke="#606060" stroke-width="0.7"/></svg>
<span class="t" style="left:295.59px;top:322.68px;font-size:7.6px;color:#303040;font-weight:normal;;transform:scaleX(0.680);transform-origin:50% 0">0</span>
<svg style="left:424.5px;top:317.5px" width="3" height="5" viewBox="0 0 3 5"><path d="M1.9 0.3V4.7M0.6 0.6L1.9 0.3" fill="none" stroke="#606060" stroke-width="0.7"/></svg>
<span class="t" style="left:419.36px;top:322.68px;font-size:7.6px;color:#303040;font-weight:normal;;transform:scaleX(0.680);transform-origin:50% 0">100</span>
<svg style="left:550.5px;top:317.5px" width="3" height="5" viewBox="0 0 3 5"><path d="M1.9 0.3V4.7M0.6 0.6L1.9 0.3" fill="none" stroke="#606060" stroke-width="0.7"/></svg>
<span class="t" style="left:545.36px;top:322.68px;font-size:7.6px;color:#303040;font-weight:normal;;transform:scaleX(0.680);transform-origin:50% 0">200</span>
</body></html>
